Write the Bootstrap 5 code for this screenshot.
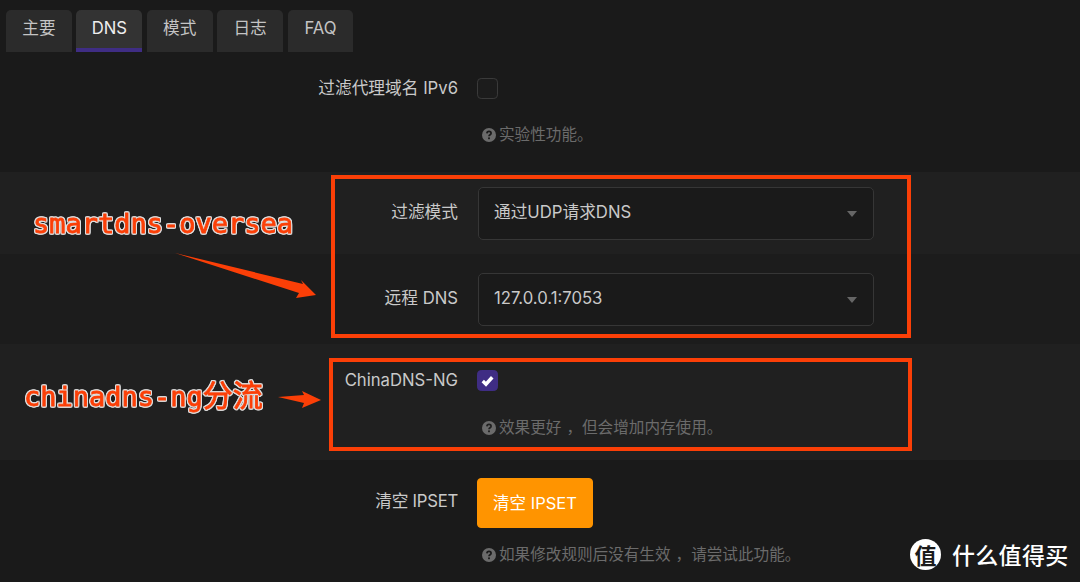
<!DOCTYPE html>
<html lang="zh-CN">
<head>
  <meta charset="UTF-8" />
  <meta name="viewport" content="width=device-width, initial-scale=1" />
  <title>DNS</title>
  <link href="https://cdn.jsdelivr.net/npm/bootstrap@5.3.3/dist/css/bootstrap.min.css" rel="stylesheet">
  <style>
    html, body {
      height: 582px;
      overflow: hidden;
    }
    body {
      background-color: #1a1a1a;
      color: #c9c9c9;
      font-family: "Inter", "Noto Sans CJK SC", sans-serif;
      font-size: 16.7px;
      position: relative;
    }
    .tab-bar {
      padding: 10px 0 0 6px;
      gap: 4.6px;
      height: 52px;
      border: 0;
    }
    .tab-bar .nav-link {
      width: 65.8px;
      height: 42px;
      padding: 6px 0 0;
      text-align: center;
      color: #c4c4c4;
      background: #2b2b2b;
      border: 0;
      border-radius: 5px 5px 0 0;
    }
    .tab-bar .nav-link.active {
      color: #eee;
      background: #333;
      border-bottom: 4px solid #3f2d84;
    }
    .form-band { background: #1a1a1a; }
    .band-light { background: #202020; }
    .band-mid { background: #1c1c1c; }
    .band-ipv6 { height: 120px; padding-top: 26px; }
    .band-mode { height: 82px; padding-top: 15px; }
    .band-remote { height: 90px; padding-top: 19px; }
    .band-china { height: 116px; padding-top: 26px; }
    .band-ipset { height: 122px; padding-top: 18px; }
    .field-label {
      flex: 0 0 458px;
      text-align: right;
      margin-right: 19px;
      line-height: 21px;
    }
    .band-mode .field-label, .band-remote .field-label { padding-top: 15px; }
    .band-ipset .field-label { padding-top: 13px; letter-spacing: -.25px; }
    .field-body { flex: 0 0 397px; }
    .dark-select {
      height: 53px;
      width: 396px;
      margin-left: 1px;
      padding: 0 16px 1px 15px;
      color: #c9c9c9;
      font-size: 16.7px;
      background-color: #1a1a1a;
      border: 1px solid #363636;
      border-radius: 5px;
      background-image: url("data:image/svg+xml,%3Csvg xmlns='http://www.w3.org/2000/svg' viewBox='0 0 10 6'%3E%3Cpath fill='%23666' d='M0 0h10L5 6z'/%3E%3C/svg%3E");
      background-size: 10px 6px;
      background-position: right 16px center;
    }
    .dark-check {
      width: 21px;
      height: 21px;
      margin: 0;
      display: block;
      float: none;
      background-color: #1c1c1c;
      border: 1px solid #3a3a3a;
      border-radius: 5px;
    }
    .dark-check:checked {
      background-color: #3f2d84;
      border-color: #3f2d84;
      background-image: url("data:image/svg+xml,%3Csvg xmlns='http://www.w3.org/2000/svg' viewBox='0 0 20 20'%3E%3Cpath fill='none' stroke='%23fff' stroke-width='3.6' d='M5 10.5l3.4 3.4L15 6.6'/%3E%3C/svg%3E");
    }
    .help-line {
      color: #6b6b6b;
      font-size: 15.6px;
      line-height: 22px;
      display: flex;
      align-items: center;
      gap: 3px;
      padding-left: 5px;
      white-space: nowrap;
    }
    .band-ipv6 .help-line { margin-top: 25px; }
    .band-china .help-line { margin-top: 26px; }
    .band-ipset .help-line { margin-top: 16px; }
    .help-line svg { width: 14px; height: 14px; flex: none; }
    .comma-gap { margin-left: 5px; }
    .ipset-btn {
      width: 116px;
      height: 50px;
      padding: 0;
      font-size: 16.5px;
      color: #fff;
      background: #ff9400;
      border: 1px solid #ff9400;
      border-radius: 4px;
    }
    /* annotations drawn on top of the screenshot */
    .note-box {
      position: absolute;
      border: 4px solid #fb3f07;
    }
    .note-one { left: 331px; top: 175px; width: 580px; height: 163px; }
    .note-two { left: 329px; top: 358px; width: 583px; height: 93px; }
    .note-text {
      position: absolute;
      font-family: "DejaVu Sans Mono", "Noto Sans CJK SC", monospace;
      font-weight: 400;
      font-size: 27px;
      line-height: 32px;
      color: #fb3f07;
      white-space: nowrap;
      -webkit-text-stroke: .8px #fb3f07;
      filter: drop-shadow(1px 0 0 #ddd) drop-shadow(-1px 0 0 #ddd) drop-shadow(0 1px 0 #ddd) drop-shadow(0 -1px 0 #ddd);
    }
    .note-text span { font-size: 30px; }
    .text-one { left: 33px; top: 208px; }
    .text-two { left: 24px; top: 380px; }
    .note-arrows {
      position: absolute;
      left: 0;
      top: 0;
      width: 1080px;
      height: 582px;
      pointer-events: none;
    }
    .brand-mark {
      position: absolute;
      left: 910px;
      top: 539px;
      display: flex;
      align-items: center;
      gap: 11px;
    }
    .brand-dot {
      width: 31px;
      height: 31px;
      border-radius: 50%;
      background: #fff;
      color: #1a1a1a;
      font-size: 22px;
      line-height: 31px;
      text-align: center;
      font-family: "Noto Sans CJK SC", sans-serif;
      font-weight: 700;
    }
    .brand-name {
      color: #fff;
      font-size: 23px;
      line-height: 31px;
      font-family: "Noto Sans CJK SC", sans-serif;
      font-weight: 500;
      letter-spacing: .3px;
    }
  </style>
</head>
<body>

<ul class="nav tab-bar">
  <li class="nav-item"><a class="nav-link" href="#">主要</a></li>
  <li class="nav-item"><a class="nav-link active" href="#">DNS</a></li>
  <li class="nav-item"><a class="nav-link" href="#">模式</a></li>
  <li class="nav-item"><a class="nav-link" href="#">日志</a></li>
  <li class="nav-item"><a class="nav-link" href="#">FAQ</a></li>
</ul>

<div class="form-band band-ipv6 d-flex">
  <label class="field-label">过滤代理域名 IPv6</label>
  <div class="field-body">
    <input class="form-check-input dark-check" type="checkbox">
    <div class="help-line">
      <svg viewBox="0 0 14 14"><circle cx="7" cy="7" r="7" fill="#6b6b6b"/><path d="M4.9 5.4C5 4 6 3.4 7 3.4c1.2 0 2.1.8 2.1 1.8 0 1.500-2.100 1.500-2.100 3" fill="none" stroke="#1a1a1a" stroke-width="1.700"/><rect x="6.100" y="9.400" width="1.800" height="1.800" fill="#1a1a1a"/></svg>
      <span>实验性功能。</span>
    </div>
  </div>
</div>

<div class="form-band band-light band-mode d-flex">
  <label class="field-label">过滤模式</label>
  <div class="field-body">
    <select class="form-select dark-select"><option>通过UDP请求DNS</option></select>
  </div>
</div>

<div class="form-band band-mid band-remote d-flex">
  <label class="field-label">远程 DNS</label>
  <div class="field-body">
    <select class="form-select dark-select"><option>127.0.0.1:7053</option></select>
  </div>
</div>

<div class="form-band band-light band-china d-flex">
  <label class="field-label">ChinaDNS-NG</label>
  <div class="field-body">
    <input class="form-check-input dark-check" type="checkbox" checked>
    <div class="help-line">
      <svg viewBox="0 0 14 14"><circle cx="7" cy="7" r="7" fill="#6b6b6b"/><path d="M4.9 5.4C5 4 6 3.4 7 3.4c1.2 0 2.1.8 2.1 1.8 0 1.500-2.100 1.500-2.100 3" fill="none" stroke="#202020" stroke-width="1.700"/><rect x="6.100" y="9.400" width="1.800" height="1.800" fill="#202020"/></svg>
      <span>效果更好<span class="comma-gap">，</span>但会增加内存使用。</span>
    </div>
  </div>
</div>

<div class="form-band band-ipset d-flex">
  <label class="field-label">清空 IPSET</label>
  <div class="field-body">
    <button type="button" class="btn ipset-btn">清空 IPSET</button>
    <div class="help-line">
      <svg viewBox="0 0 14 14"><circle cx="7" cy="7" r="7" fill="#6b6b6b"/><path d="M4.9 5.4C5 4 6 3.4 7 3.4c1.2 0 2.1.8 2.1 1.8 0 1.500-2.100 1.500-2.100 3" fill="none" stroke="#1a1a1a" stroke-width="1.700"/><rect x="6.100" y="9.400" width="1.800" height="1.800" fill="#1a1a1a"/></svg>
      <span>如果修改规则后没有生效<span class="comma-gap">，</span>请尝试此功能。</span>
    </div>
  </div>
</div>

<div class="note-box note-one"></div>
<div class="note-box note-two"></div>
<div class="note-text text-one">smartdns-oversea</div>
<div class="note-text text-two">chinadns-ng<span>分流</span></div>
<svg class="note-arrows" viewBox="0 0 1080 582">
  <path fill="#fb3f07" d="M175 253L303 284L301 280L316 295L296 298L299 293Z"/>
  <path fill="#fb3f07" d="M278 397L304 395L302 391L321 400L302 408L304 403Z"/>
</svg>

<div class="brand-mark">
  <div class="brand-dot">值</div>
  <div class="brand-name">什么值得买</div>
</div>

<script src="https://cdn.jsdelivr.net/npm/bootstrap@5.3.3/dist/js/bootstrap.bundle.min.js"></script>
</body>
</html>
